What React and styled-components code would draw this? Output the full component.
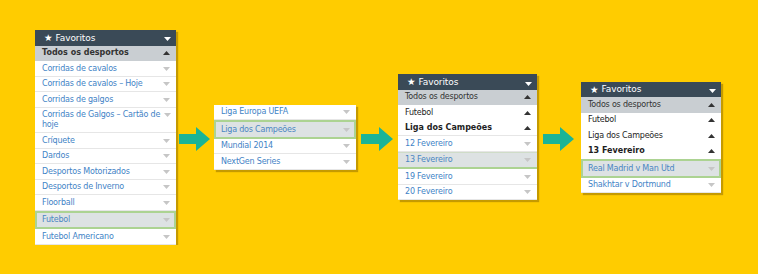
import React from 'react';
import styled, { createGlobalStyle, css } from 'styled-components';

const Global = createGlobalStyle`
  html, body { margin: 0; padding: 0; background: #ffcc00; }
  body { font-family: "DejaVu Sans", Verdana, sans-serif; }
`;

const Stage = styled.div`
  display: flex;
  align-items: center;
  padding: 30px 0 0 35px;
`;

const Panel = styled.div`
  flex: none;
  width: ${p => p.$w}px;
  background: #fff;
  box-shadow: 2px 2px 1px rgba(90, 60, 0, 0.35);
  display: flex;
  flex-direction: column;
`;

const Header = styled.div`
  box-sizing: border-box;
  height: 15.5px;
  background: #3a4a57;
  color: #fff;
  font-size: 9px;
  display: flex;
  align-items: center;
  padding: 0 5px 0 9px;
  gap: 3px;
`;

const Star = styled.span`
  font-size: 9.5px;
  line-height: 1;
`;

const Title = styled.span`
  flex: 1;
  letter-spacing: -0.1px;
`;

const kinds = {
  all: css`
    background: #c9ced2;
    color: #333;
    border-bottom: none;
  `,
  open: css`
    background: #fff;
    color: #1e1e1e;
    border-bottom: 1px solid transparent;
  `,
  item: css`
    background: #fff;
    color: #3f83c6;
    border-bottom: 1px solid #e6e6e6;
  `,
  selected: css`
    background: #dde2e3;
    color: #4a86c2;
    border: 2px solid #acd392;
    padding-left: 5px;
    padding-right: 4px;
  `,
  selectedBottom: css`
    background: #dde2e3;
    color: #4a86c2;
    border-top: 1px solid #cfdcc8;
    border-bottom: 2px solid #acd392;
  `,
};

const Row = styled.div`
  box-sizing: border-box;
  min-height: 15.5px;
  display: flex;
  align-items: flex-start;
  justify-content: space-between;
  gap: 4px;
  padding: 2.5px 6px 2px 7px;
  font-size: 8px;
  line-height: 10px;
  letter-spacing: ${p => (p.$bold ? '0' : '-0.2px')};
  font-weight: ${p => (p.$bold ? 700 : 400)};
  ${p => kinds[p.$kind]}
  ${p => p.$sep && css`border-bottom: 1px solid #e6e6e6;`}
`;

const Label = styled.span`
  flex: 1;
  white-space: nowrap;
`;

const CaretSvg = styled.svg`
  flex: none;
  margin-top: 3px;
  display: block;
`;

const Caret = ({ up, color }) => (
  <CaretSvg width="7" height="4" viewBox="0 0 7 4">
    <polygon points={up ? '0,4 7,4 3.5,0' : '0,0 7,0 3.5,4'} fill={color} />
  </CaretSvg>
);

const ArrowBox = styled.div`
  flex: none;
  width: ${p => p.$w}px;
  margin: 3px ${p => p.$mr}px 0 ${p => p.$ml}px;
  display: flex;
`;

const Arrow = ({ w = 31, ml, mr }) => (
  <ArrowBox $w={w} $ml={ml} $mr={mr}>
    <svg width={w} height="24" viewBox={`0 0 ${w} 24`}>
      <polygon
        points={`0,7 ${w - 14},7 ${w - 14},0 ${w},12 ${w - 14},24 ${w - 14},17 0,17`}
        fill="#1bb496"
      />
    </svg>
  </ArrowBox>
);

const caretFor = kind => {
  if (kind === 'all' || kind === 'open') return <Caret up color="#333" />;
  return <Caret color="#c6c6c6" />;
};

const Item = ({ kind, bold, sep, children }) => (
  <Row $kind={kind} $bold={bold} $sep={sep}>
    <Label>{children}</Label>
    {caretFor(kind)}
  </Row>
);

const Fav = () => (
  <Header>
    <Star>★</Star>
    <Title>Favoritos</Title>
    <Caret color="#fff" />
  </Header>
);

export default function App() {
  return (
    <>
      <Global />
      <Stage>
        <Panel $w={141}>
          <Fav />
          <Item kind="all" bold>Todos os desportos</Item>
          <Item kind="item">Corridas de cavalos</Item>
          <Item kind="item">Corridas de cavalos – Hoje</Item>
          <Item kind="item">Corridas de galgos</Item>
          <Item kind="item">
            Corridas de Galgos – Cartão de
            <br />
            hoje
          </Item>
          <Item kind="item">Críquete</Item>
          <Item kind="item">Dardos</Item>
          <Item kind="item">Desportos Motorizados</Item>
          <Item kind="item">Desportos de Inverno</Item>
          <Item kind="item">Floorball</Item>
          <Item kind="selected">Futebol</Item>
          <Item kind="item">Futebol Americano</Item>
        </Panel>
        <Arrow w={31} ml={3} mr={4} />
        <Panel $w={142}>
          <Item kind="item">Liga Europa UEFA</Item>
          <Item kind="selected">Liga dos Campeões</Item>
          <Item kind="item">Mundial 2014</Item>
          <Item kind="item">NextGen Series</Item>
        </Panel>
        <Arrow w={32} ml={5} mr={5} />
        <Panel $w={139}>
          <Fav />
          <Item kind="all">Todos os desportos</Item>
          <Item kind="open">Futebol</Item>
          <Item kind="open" bold sep>Liga dos Campeões</Item>
          <Item kind="item">12 Fevereiro</Item>
          <Item kind="selectedBottom">13 Fevereiro</Item>
          <Item kind="item">19 Fevereiro</Item>
          <Item kind="item">20 Fevereiro</Item>
        </Panel>
        <Arrow w={31} ml={6} mr={7} />
        <Panel $w={140}>
          <Fav />
          <Item kind="all">Todos os desportos</Item>
          <Item kind="open">Futebol</Item>
          <Item kind="open">Liga dos Campeões</Item>
          <Item kind="open" bold>13 Fevereiro</Item>
          <Item kind="selected">Real Madrid v Man Utd</Item>
          <Item kind="item">Shakhtar v Dortmund</Item>
        </Panel>
      </Stage>
    </>
  );
}
